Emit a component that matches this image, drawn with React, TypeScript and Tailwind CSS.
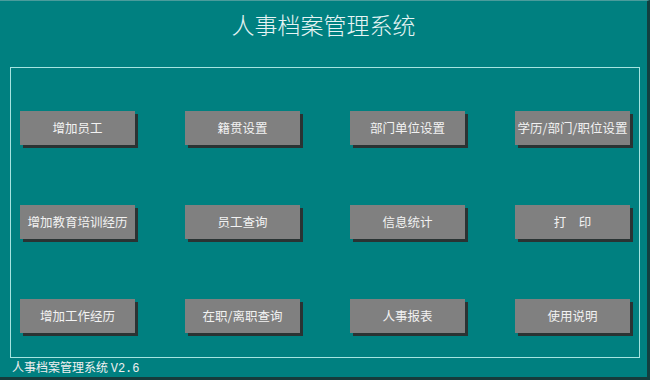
import React from "react";

const rows = [
  ["增加员工", "籍贯设置", "部门单位设置", "学历/部门/职位设置"],
  ["增加教育培训经历", "员工查询", "信息统计", "打\u3000印"],
  ["增加工作经历", "在职/离职查询", "人事报表", "使用说明"],
];

export default function App() {
  return (
    <div
      className="w-[650px] h-[380px] bg-[#008080] border-t border-t-[#4a9c9c] border-r-[3px] border-r-[#123f3f] border-b-[3px] border-b-[#163c3c] flex flex-col overflow-hidden"
      style={{ fontFamily: '"Noto Sans CJK SC", "Noto Sans", sans-serif' }}
    >
      <div className="h-[67px] flex justify-center pt-[8px]">
        <h1 className="text-[23px] leading-[30px] text-[#e6f4f4] font-light">
          人事档案管理系统
        </h1>
      </div>
      <div className="ml-[10px] w-[630px] h-[293px] border border-[#a6e4e0] pt-[43px] pl-[9px]">
        <div className="grid grid-cols-[repeat(4,115px)] gap-x-[50px] gap-y-[60px]">
          {rows.flat().map((t, i) => (
            <button
              key={i}
              className="h-[34px] bg-[#808080] text-[#f2f2f2] text-[12.5px] shadow-[3px_3px_0_#2a3333] flex items-center justify-center whitespace-nowrap"
            >
              {t}
            </button>
          ))}
        </div>
      </div>
      <div className="pl-[12px] pt-[1px] text-[12px] leading-[16px] text-[#f0f0f0]">
        人事档案管理系统 <span style={{ fontFamily: '"Liberation Mono", monospace' }}>V2.6</span>
      </div>
    </div>
  );
}
